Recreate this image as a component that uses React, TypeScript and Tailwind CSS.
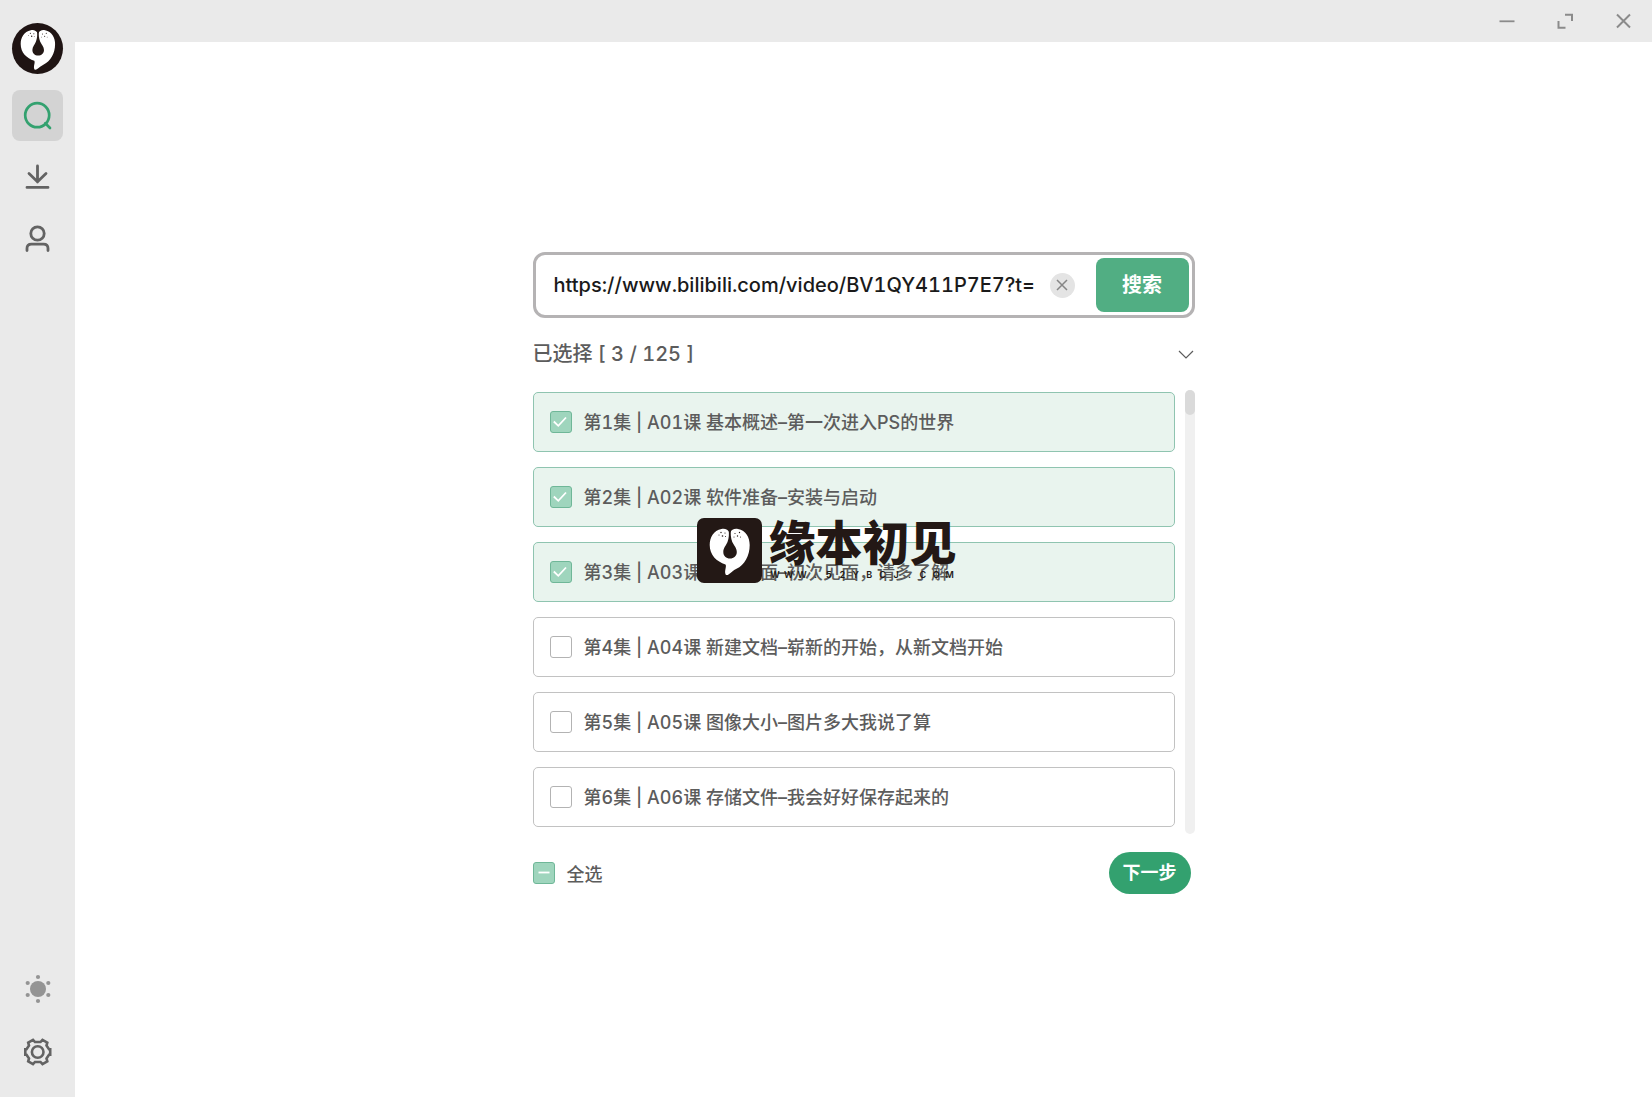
import { useState } from "react";

const initialEpisodes = [
  { id: 1, title: "第1集 | A01课 基本概述–第一次进入PS的世界", checked: true },
  { id: 2, title: "第2集 | A02课 软件准备–安装与启动", checked: true },
  { id: 3, title: "第3集 | A03课 认识界面–初次见面，请多了解", checked: true },
  { id: 4, title: "第4集 | A04课 新建文档–崭新的开始，从新文档开始", checked: false },
  { id: 5, title: "第5集 | A05课 图像大小–图片多大我说了算", checked: false },
  { id: 6, title: "第6集 | A06课 存储文件–我会好好保存起来的", checked: false },
];

function BrandMark() {
  return (
    <g>
      <path
        d="M32.8 15C31 11.5 28 10.3 24.5 11C16.5 12.5 12.7 19.5 12.7 27C12.7 37 19.5 43.5 28.5 46.5C29.8 48.5 27.5 52 28.3 55.5C28.6 57.2 30 57.4 31.5 56.5C34.5 54.5 36 52.5 39.5 50.8C47.5 47 52.7 38 52.7 27C52.7 19.5 49 12.5 41 11C37.5 10.3 34.5 11.5 32.8 15Z"
        fill="#fff"
      />
      <path
        d="M31.6 12C32.2 16 32 20 30.5 24C29 27.5 26.3 30 26.3 34C26.3 38 29.2 40.5 33 40.5C36.8 40.5 39.8 38 39.8 34C39.8 30 37 27.5 35.3 24C33.8 20 33.4 16 34 12Z"
        fill="#231815"
      />
      <g fill="#231815">
        <circle cx="24" cy="14.5" r="0.7" />
        <circle cx="28" cy="15" r="0.6" />
        <circle cx="22" cy="17" r="0.5" />
        <circle cx="25.5" cy="18" r="0.8" />
        <circle cx="28.5" cy="18.5" r="0.5" />
        <circle cx="38" cy="15.5" r="0.6" />
        <circle cx="42.5" cy="14.5" r="0.7" />
        <circle cx="40.5" cy="18" r="0.7" />
        <circle cx="37" cy="19" r="0.5" />
        <circle cx="43.5" cy="19" r="0.5" />
      </g>
    </g>
  );
}

function Sidebar() {
  const item = "flex size-[51px] items-center justify-center rounded-lg";

  return (
    <aside className="flex w-[75px] shrink-0 flex-col items-center bg-[#eaeaea] pt-[23px] pb-5">
      <svg viewBox="2.6 2.6 59.3 59.3" className="size-[51px] rounded-full bg-[#1f1413]" role="img" aria-label="Logo">
        <BrandMark />
      </svg>

      <nav className="mt-4 flex flex-col gap-[10px]">
        <button className={`${item} bg-[#d3d3d3]`} aria-label="搜索页">
          <svg width="30" height="30" viewBox="0 0 30 30" fill="none" stroke="#33a16f" strokeWidth="2.7" strokeLinecap="round">
            <circle cx="14.2" cy="14.2" r="12" />
            <path d="M22.3 22.3L27 27" />
          </svg>
        </button>
        <button className={item} aria-label="下载">
          <svg width="26" height="26" viewBox="0 0 26 26" fill="none" stroke="#636363" strokeWidth="2.8" strokeLinecap="round" strokeLinejoin="round">
            <path d="M12.5 2V18M4 9.5L12.5 17.8L21 9.5M2 23.4H23" />
          </svg>
        </button>
        <button className={item} aria-label="用户">
          <svg width="26" height="28" viewBox="0 0 26 28" fill="none" stroke="#636363" strokeWidth="2.8" strokeLinecap="round">
            <circle cx="12.5" cy="9.5" r="6.7" />
            <path d="M2 26.5V24.3C2 21.6 3.8 20.1 6.5 20.1H18.5C21.2 20.1 23 21.6 23 24.3V26.5" />
          </svg>
        </button>
      </nav>

      <div className="mt-auto flex flex-col gap-3">
        <button className={item} aria-label="主题">
          <svg width="30" height="30" viewBox="0 0 30 30" fill="#949494">
            <circle cx="15" cy="15" r="8" />
            <circle cx="15" cy="3" r="2.1" />
            <circle cx="15" cy="27" r="2.1" />
            <circle cx="4.7" cy="9" r="2.1" />
            <circle cx="25.3" cy="9" r="2.1" />
            <circle cx="4.7" cy="21" r="2.1" />
            <circle cx="25.3" cy="21" r="2.1" />
          </svg>
        </button>
        <button className={item} aria-label="设置">
          <svg width="30" height="30" viewBox="0 0 30 30" fill="none" stroke="#636363" strokeWidth="2.6">
            <path d="M10 2.8L12 5H17.5L19.5 2.8L24.3 5.6L23.5 8.6L26 12.2H27.2V17.8H26L23.5 21.4L24.3 24.4L19.5 27.2L17.5 25H12L10 27.2L5.2 24.4L6 21.4L3.5 17.8H2.3V12.2H3.5L6 8.6L5.2 5.6Z" />
            <circle cx="14.7" cy="15" r="5.8" />
          </svg>
        </button>
      </div>
    </aside>
  );
}

function TitleBar() {
  const control = "flex w-[58px] items-center justify-center";

  return (
    <header className="flex h-[42px] shrink-0 justify-end bg-[#eaeaea]">
      <button className={control} aria-label="最小化">
        <svg width="16" height="16" viewBox="0 0 16 16" stroke="#8b8b8b" strokeWidth="1.8">
          <path d="M0.5 8.3H15.5" />
        </svg>
      </button>
      <button className={control} aria-label="最大化">
        <svg width="16" height="16" viewBox="0 0 16 16" fill="none" stroke="#8b8b8b" strokeWidth="2">
          <path d="M8 1.8H15V8M1.5 8V14.8H8.5" />
        </svg>
      </button>
      <button className={control} aria-label="关闭">
        <svg width="16" height="16" viewBox="0 0 16 16" stroke="#8b8b8b" strokeWidth="2">
          <path d="M2 1.5L15 14.5M15 1.5L2 14.5" />
        </svg>
      </button>
    </header>
  );
}

function CheckBox({ id, checked, partial, onChange }) {
  const on = checked || partial;

  return (
    <span className="relative block size-[22px] shrink-0">
      <input
        id={id}
        type="checkbox"
        checked={checked}
        onChange={onChange}
        className={`block size-[22px] appearance-none rounded-[3px] border ${on ? "border-[#6fb798] bg-[#9fd5bd]" : "border-[#b3b3b3] bg-white"}`}
      />
      {on && (
        <svg viewBox="0 0 22 22" className="pointer-events-none absolute inset-0" fill="none" stroke="#fff" strokeWidth="1.8">
          <path d={partial ? "M5.5 10.5H16.5" : "M3.8 10.5L8.3 14.8L16 6.5"} />
        </svg>
      )}
    </span>
  );
}

function Watermark() {
  return (
    <div className="pointer-events-none absolute top-[128px] left-[164px] flex gap-[7px] text-[#231815]">
      <svg viewBox="0 0 65 65" className="size-[65px] shrink-0 rounded-[7px] bg-[#231815]">
        <BrandMark />
      </svg>
      <div>
        <p className="text-[47px] leading-[50px] font-black whitespace-nowrap">缘本初见</p>
        <p className="flex text-center text-[9px] leading-[14px] font-semibold">
          {"WWW.52YBCJ.COM".split("").map((char, i) => (
            <span key={i} className="flex-1">
              {char}
            </span>
          ))}
        </p>
      </div>
    </div>
  );
}

export default function App() {
  const [url, setUrl] = useState("https://www.bilibili.com/video/BV1QY411P7E7?t=");
  const [episodes, setEpisodes] = useState(initialEpisodes);

  const selected = episodes.filter((e) => e.checked).length;
  const allChecked = selected === episodes.length;

  const toggle = (id) => {
    setEpisodes(episodes.map((e) => (e.id === id ? { ...e, checked: !e.checked } : e)));
  };

  const toggleAll = () => {
    setEpisodes(episodes.map((e) => ({ ...e, checked: !allChecked })));
  };

  return (
    <div className="flex min-h-screen bg-white font-['Inter','Noto_Sans_CJK_SC',sans-serif] text-[#5c5c5c] tabular-nums">
      <Sidebar />

      <div className="flex min-w-0 flex-1 flex-col">
        <TitleBar />

        <main className="mx-auto w-full max-w-[662px] pt-[210px]">
          <form
            onSubmit={(e) => e.preventDefault()}
            className="flex h-[66px] items-center rounded-xl border-3 border-[#b5b3b4] p-[3px] pl-[18px]"
          >
            <input
              type="text"
              aria-label="视频链接"
              value={url}
              onChange={(e) => setUrl(e.target.value)}
              className="min-w-0 flex-1 text-xl font-medium text-[#1a1a1a] tabular-nums outline-none"
            />
            <button
              type="button"
              aria-label="清空"
              onClick={() => setUrl("")}
              className="mx-[10px] flex size-[25px] shrink-0 items-center justify-center rounded-full bg-[#e4e4e4]"
            >
              <svg width="12" height="12" viewBox="0 0 12 12" stroke="#858585" strokeWidth="1.5">
                <path d="M1 1L11 11M11 1L1 11" />
              </svg>
            </button>
            <button type="submit" className="ml-[11px] h-[54px] w-[93px] shrink-0 rounded-lg bg-[#51ae83] text-xl font-bold text-white">
              搜索
            </button>
          </form>

          <div className="mt-[21px] flex h-[30px] items-center justify-between">
            <p className="text-xl font-medium">已选择 [ {selected} / 125 ]</p>
            <button aria-label="收起">
              <svg width="18" height="18" viewBox="0 0 18 18" fill="none" stroke="#5c5c5c" strokeWidth="1.2">
                <path d="M2 6L9 13L16 6" />
              </svg>
            </button>
          </div>

          <div className="relative mt-[21px] flex justify-between">
            <ul className="mt-[2px] flex w-[642px] flex-col gap-[15px]">
              {episodes.map((e) => (
                <li
                  key={e.id}
                  className={`flex h-[60px] items-center rounded-[5px] border px-4 ${e.checked ? "border-[#8fc4b0] bg-[#e9f4ee]" : "border-[#c2c2c2] bg-white"}`}
                >
                  <CheckBox id={`episode-${e.id}`} checked={e.checked} partial={false} onChange={() => toggle(e.id)} />
                  <label htmlFor={`episode-${e.id}`} className="ml-3 pt-[2px] text-lg font-medium whitespace-nowrap">
                    {e.title}
                  </label>
                </li>
              ))}
            </ul>
            <div className="h-[444px] w-[10px] rounded-full bg-[#f0f0f0]">
              <div className="h-[25px] rounded-full bg-[#dadada]" />
            </div>
            <Watermark />
          </div>

          <div className="mt-[18px] flex h-[42px] items-center justify-between pr-1">
            <div className="flex items-center">
              <CheckBox id="select-all" checked={allChecked} partial={selected > 0 && !allChecked} onChange={toggleAll} />
              <label htmlFor="select-all" className="ml-3 pt-1 text-lg font-medium">
                全选
              </label>
            </div>
            <button className="h-[42px] w-[82px] rounded-full bg-[#33a16f] text-lg font-bold text-white">下一步</button>
          </div>
        </main>
      </div>
    </div>
  );
}
